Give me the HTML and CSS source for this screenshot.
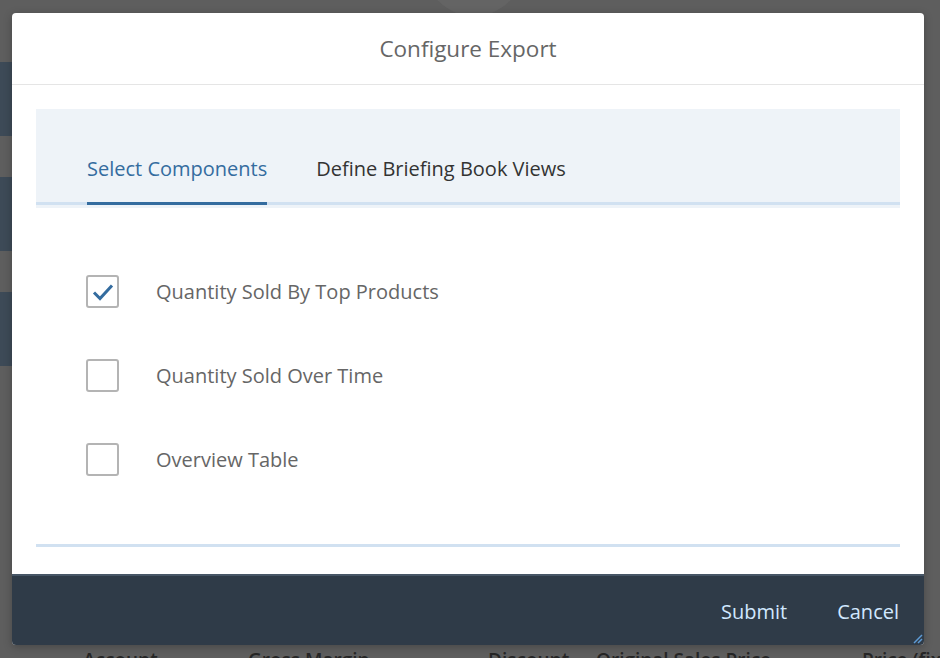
FILE: index.html
```html
<!DOCTYPE html>
<html lang="en">
<head>
  <meta charset="UTF-8">
  <meta name="viewport" content="width=device-width, initial-scale=1.0">
  <title>Configure Export</title>
  <link rel="stylesheet" href="styles.css">
</head>
<body>
  <!-- page behind the dialog -->
  <div class="page">
    <div class="page-top">
      <span class="avatar"></span>
    </div>
    <div class="tiles">
      <div class="tile"></div>
      <div class="tile"></div>
      <div class="tile"></div>
    </div>
    <div class="cols">
      <span class="col col-account">Account</span>
      <span class="col col-margin">Gross Margin</span>
      <span class="col col-discount">Discount</span>
      <span class="col col-orig">Original Sales Price</span>
      <span class="col col-price">Price (fixed)</span>
    </div>
  </div>

  <div class="dialog">
    <div class="dialog-header">Configure Export</div>

    <div class="dialog-body">
      <div class="tabbar">
        <div class="tabs">
          <div class="tab active">Select Components</div>
          <div class="tab">Define Briefing Book Views</div>
        </div>
      </div>

      <div class="options">
        <label class="option">
          <span class="checkbox checked">
            <svg width="22" height="18" viewBox="0 0 22 18">
              <path d="M2 9.5 L8 15.5 L20 2.5" fill="none" stroke="#346c9f" stroke-width="3"/>
            </svg>
          </span>
          <span class="option-label">Quantity Sold By Top Products</span>
        </label>
        <label class="option">
          <span class="checkbox"></span>
          <span class="option-label">Quantity Sold Over Time</span>
        </label>
        <label class="option">
          <span class="checkbox"></span>
          <span class="option-label">Overview Table</span>
        </label>
      </div>
    </div>

    <div class="dialog-footer">
      <button class="btn">Submit</button>
      <button class="btn">Cancel</button>
      <svg class="resize" width="12" height="12" viewBox="0 0 12 12">
        <path d="M11 3 L3 11 M11 7 L7 11" stroke="#5d9bd5" stroke-width="1.5"/>
      </svg>
    </div>
  </div>
</body>
</html>
```

FILE: styles.css
```css
* {
  box-sizing: border-box;
  margin: 0;
  padding: 0;
}

body {
  background-color: #5e5e5e;
  font-family: 'Open Sans', 'Noto Sans', sans-serif;
  width: 940px;
  height: 658px;
  overflow: hidden;
  position: relative;
}

/* Page behind the overlay */
.page {
  height: 658px;
  display: flex;
  flex-direction: column;
}

.page-top {
  display: flex;
  justify-content: center;
  height: 62px;
}

.avatar {
  width: 100px;
  height: 100px;
  margin-top: -84px;
  margin-left: 8px;
  border-radius: 50%;
  background-color: #646464;
}

.tiles {
  display: flex;
  flex-direction: column;
  gap: 41px;
}

.tile {
  width: 40px;
  height: 74px;
  background-color: #3d4a57;
}

.cols {
  margin-top: auto;
  height: 8px;
  display: flex;
  font-size: 19px;
  font-weight: 600;
  color: #262626;
  line-height: 20px;
  white-space: nowrap;
}

.col {
  flex-shrink: 0;
}

.col-account { margin-left: 83px; width: 165px; }
.col-margin { width: 240px; }
.col-discount { width: 108px; }
.col-orig { width: 266px; }

/* Dialog */
.dialog {
  position: absolute;
  left: 12px;
  top: 13px;
  width: 912px;
  height: 632px;
  background-color: #fff;
  border-radius: 4px;
  box-shadow: 0 2px 8px rgba(0, 0, 0, 0.25);
  display: flex;
  flex-direction: column;
  overflow: hidden;
}

.dialog-header {
  height: 73px;
  border-bottom: 1px solid #e5e5e5;
  display: flex;
  align-items: center;
  justify-content: center;
  font-size: 22.5px;
  color: #666;
}

.dialog-body {
  flex: 1;
  padding: 24px 24px 0;
  display: flex;
  flex-direction: column;
}

.tabbar {
  background-color: #eef3f8;
  padding-bottom: 3px;
}

.tabs {
  display: flex;
  gap: 49px;
  padding-left: 51px;
  border-bottom: 3px solid #d1e1f1;
}

.tab {
  padding: 45px 0 19px;
  font-size: 20px;
  line-height: 29px;
  color: #333;
}

.tab.active {
  color: #346c9f;
  border-bottom: 3px solid #346c9f;
  margin-bottom: -3px;
}

.options {
  padding: 41px 0 0 50px;
  border-bottom: 3px solid #d1e1f1;
  height: 339px;
}

.option {
  display: flex;
  align-items: center;
  gap: 37px;
  height: 84px;
}

.checkbox {
  width: 33px;
  height: 33px;
  border: 2px solid #b4b4b4;
  border-radius: 3px;
  display: flex;
  align-items: center;
  justify-content: center;
}

.checkbox svg {
  margin-top: 1px;
}

.option-label {
  font-size: 20px;
  color: #666;
}

.dialog-footer {
  height: 71px;
  margin-top: 27px;
  background-color: #2f3b48;
  border-top: 2px solid #475666;
  display: flex;
  align-items: center;
  justify-content: flex-end;
  gap: 50px;
  padding: 1px 25px 0 0;
  position: relative;
}

.btn {
  background: none;
  border: none;
  font-family: inherit;
  font-size: 20px;
  color: #d1e8ff;
  cursor: pointer;
}

.resize {
  position: absolute;
  right: 1px;
  bottom: 1px;
}
```
